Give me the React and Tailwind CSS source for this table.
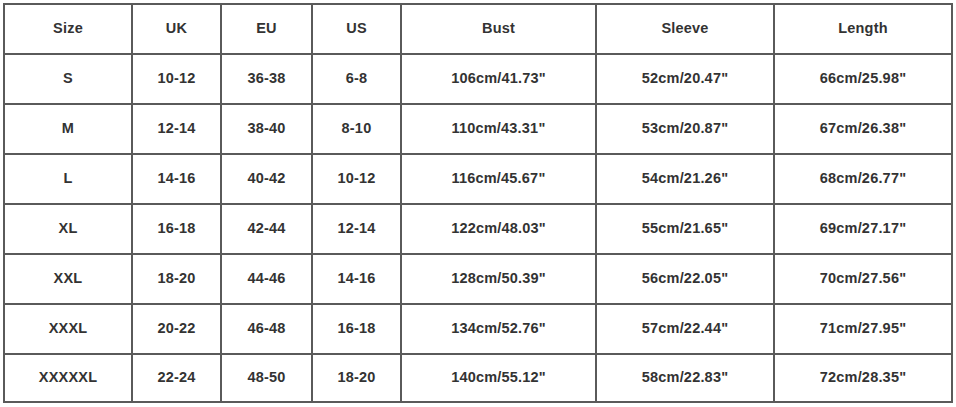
import React from 'react';

const columns = ['Size', 'UK', 'EU', 'US', 'Bust', 'Sleeve', 'Length'];

const rows = [
    ['S', '10-12', '36-38', '6-8', '106cm/41.73"', '52cm/20.47"', '66cm/25.98"'],
    ['M', '12-14', '38-40', '8-10', '110cm/43.31"', '53cm/20.87"', '67cm/26.38"'],
    ['L', '14-16', '40-42', '10-12', '116cm/45.67"', '54cm/21.26"', '68cm/26.77"'],
    ['XL', '16-18', '42-44', '12-14', '122cm/48.03"', '55cm/21.65"', '69cm/27.17"'],
    ['XXL', '18-20', '44-46', '14-16', '128cm/50.39"', '56cm/22.05"', '70cm/27.56"'],
    ['XXXL', '20-22', '46-48', '16-18', '134cm/52.76"', '57cm/22.44"', '71cm/27.95"'],
    ['XXXXXL', '22-24', '48-50', '18-20', '140cm/55.12"', '58cm/22.83"', '72cm/28.35"'],
];

const App = () => {
    const all = [columns, ...rows];

    return (
        <div className="w-[956px] h-[407px] bg-white pl-[3px] pt-[3px]" style={{ fontFamily: '"Liberation Sans", Arial, sans-serif' }}>
            <div className="grid w-[950px] grid-cols-[126px_87px_89px_87px_193px_176px_176px] grid-rows-[48px_48px_48px_48px_48px_48px_48px_46px] gap-[2px] bg-[#5a5a5a] p-[2px]">
                {all.flatMap((row, i) =>
                    row.map((cell, j) => (
                        <div
                            key={`${i}-${j}`}
                            className="flex items-center justify-center bg-white text-[14.5px] tracking-[0.2px] font-bold text-[#333333]"
                        >
                            {cell}
                        </div>
                    ))
                )}
            </div>
        </div>
    );
};

export default App;
